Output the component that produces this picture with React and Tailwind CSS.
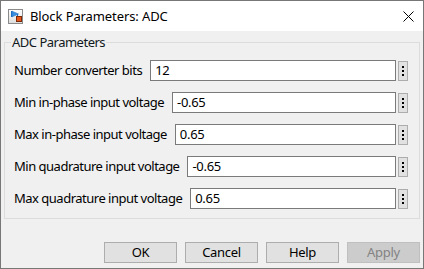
import React from "react";

const rows = [
  ["Number converter bits", "12"],
  ["Min in-phase input voltage", "-0.65"],
  ["Max in-phase input voltage", "0.65"],
  ["Min quadrature input voltage", "-0.65"],
  ["Max quadrature input voltage", "0.65"],
];

function BlockIcon() {
  return (
    <svg width="15" height="15" viewBox="0 0 15 15" className="block">
      <defs>
        <linearGradient id="ig" x1="0" y1="0" x2="0" y2="1">
          <stop offset="0" stopColor="#ffffff" />
          <stop offset="1" stopColor="#dcdcdc" />
        </linearGradient>
      </defs>
      <rect x="0.5" y="0.5" width="14" height="14" fill="url(#ig)" stroke="#8a8a8a" />
      <rect x="3" y="2" width="1.2" height="6" fill="#1f6fc4" />
      <path d="M4 2.2 L10.5 5 L4 7.8 Z" fill="#3b8fe0" stroke="#1f6fc4" strokeWidth="0.6" />
      <path d="M9.5 5 V8.5" stroke="#1f6fc4" strokeWidth="1" />
      <rect x="8.5" y="7.5" width="5" height="5" fill="#e8571a" stroke="#7a2a08" strokeWidth="1" />
    </svg>
  );
}

function Ellipsis() {
  return (
    <button className="ml-[2px] flex h-[20px] w-[10px] flex-none flex-col items-center justify-center gap-[2px] border border-[#adadad] bg-[#e1e1e1] p-0">
      <span className="block h-[2px] w-[2px] bg-black" />
      <span className="block h-[2px] w-[2px] bg-black" />
      <span className="block h-[2px] w-[2px] bg-black" />
    </button>
  );
}

export default function App() {
  return (
    <div
      className="flex h-[269px] w-[424px] flex-col border border-[#777777] bg-[#f0f0f0] text-black"
      style={{ fontFamily: '"Noto Sans", "Open Sans", sans-serif' }}
    >
      <div className="flex h-[30px] flex-none items-center bg-white pl-[7px] pr-[9px]">
        <BlockIcon />
        <span className="ml-[7px] text-[13px] leading-none tracking-[-0.1px]">Block Parameters: ADC</span>
        <svg width="11" height="11" viewBox="0 0 11 11" className="ml-auto">
          <path d="M0.5 0.5 L10.5 10.5 M10.5 0.5 L0.5 10.5" stroke="#000" strokeWidth="1" />
        </svg>
      </div>
      <div className="flex flex-1 flex-col px-[3px]">
        <fieldset className="mt-[3px] border border-[#dcdcdc] pb-[9px] pl-[9px] pr-[11px]">
          <legend className="-ml-[3px] px-[1px] text-[13px] leading-[16px] tracking-[-0.5px] text-[#101820]">
            ADC Parameters
          </legend>
          <div className="mt-[10px] flex flex-col gap-[11px]">
            {rows.map(([label, value]) => (
              <div key={label} className="flex h-[21px] items-center">
                <span className="mr-[8px] flex-none text-[13px] leading-none tracking-[-0.5px]">{label}</span>
                <div className="flex h-[21px] flex-1 items-center border border-[#7a7a7a] bg-white pl-[4px] text-[13px] leading-none tracking-[-0.3px]">
                  {value}
                </div>
                <Ellipsis />
              </div>
            ))}
          </div>
        </fieldset>
        <div className="mt-[23px] flex justify-end gap-[8px]">
          {["OK", "Cancel", "Help"].map((b) => (
            <button
              key={b}
              className="flex h-[21px] w-[73px] items-center justify-center border border-[#adadad] bg-[#e1e1e1] text-[13px] leading-none tracking-[-0.3px] text-black"
            >
              {b}
            </button>
          ))}
          <button className="flex h-[21px] w-[73px] items-center justify-center border border-[#bfbfbf] bg-[#cccccc] text-[13px] leading-none tracking-[-0.3px] text-[#838383]">
            Apply
          </button>
        </div>
      </div>
    </div>
  );
}
